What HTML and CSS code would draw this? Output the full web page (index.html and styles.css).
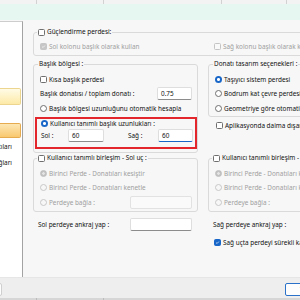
FILE: index.html
```html
<!DOCTYPE html>
<html lang="tr">
<head>
    <meta charset="UTF-8">
    <title>Perde Başlık Ayarları</title>
    <link rel="stylesheet" href="styles.css">
</head>
<body>
<div class="window">
    <div class="topbar">
        <div class="tab w37"></div>
        <div class="tab w67"></div>
        <div class="tab w118"></div>
        <div class="tab w65"></div>
        <div class="tab"></div>
    </div>
    <div class="ribbon"></div>

    <div class="body">
        <div class="side">
            <div class="item hot"></div>
            <div class="item plain"></div>
            <div class="item sel"></div>
            <div class="item text"><span>Donatıları</span></div>
            <div class="item text"><span>Bağları</span></div>
        </div>

        <div class="main">
            <!-- Güçlendirme -->
            <fieldset class="group wide">
                <legend><span class="cb"></span>Güçlendirme perdesi:</legend>
                <div class="pair">
                    <div class="row off"><span class="cb on dis"><svg viewBox="0 0 8 8"><path d="M1.8 4.2 3.3 5.6 6.2 2.5"/></svg></span>Sol kolonu başlık olarak kullan</div>
                    <div class="row off"><span class="cb dis"></span>Sağ kolonu başlık olarak kullan</div>
                </div>
            </fieldset>

            <div class="cols top">
                <fieldset class="group">
                    <legend class="txt">Başlık bölgesi :</legend>
                    <div class="row"><span class="cb"></span>Kısa başlık perdesi</div>
                    <div class="row spread">Başlık donatısı / toplam donatı :<span class="field w35">0.75</span></div>
                    <div class="row"><span class="rb"></span>Başlık bölgesi uzunluğunu otomatik hesapla</div>
                    <div class="mark">
                        <div class="row short"><span class="rb on"></span>Kullanıcı tanımlı başlık uzunlukları :</div>
                        <div class="row">
                            <span class="lbl w27">Sol :</span><span class="field w36">60</span>
                            <span class="lbl w30 gap24">Sağ :</span><span class="field w35 focus">60</span>
                        </div>
                    </div>
                </fieldset>

                <div>
                    <fieldset class="group bare">
                        <legend class="txt">Donatı tasarım seçenekleri :</legend>
                        <div class="row"><span class="rb on"></span>Taşıyıcı sistem perdesi</div>
                        <div class="row"><span class="rb"></span>Bodrum kat çevre perdesi</div>
                        <div class="row"><span class="rb"></span>Geometriye göre otomatik belirle</div>
                    </fieldset>
                    <div class="row apl"><span class="cb"></span>Aplikasyonda daima dışarıdan göster</div>
                </div>
            </div>

            <div class="cols mid">
                <fieldset class="group">
                    <legend><span class="cb"></span>Kullanıcı tanımlı birleşim - Sol uç :</legend>
                    <div class="row off"><span class="rb on dis"></span>Birinci Perde - Donatıları kesiştir</div>
                    <div class="row off"><span class="rb dis"></span>Birinci Perde - Donatıları kenetle</div>
                    <div class="row off"><span class="rb dis"></span><span class="lbl w83">Perdeye bağla :</span><span class="field w62 dim"></span></div>
                </fieldset>
                <fieldset class="group">
                    <legend><span class="cb"></span>Kullanıcı tanımlı birleşim - Sağ uç :</legend>
                    <div class="row off"><span class="rb on dis"></span>Birinci Perde - Donatıları kesiştir</div>
                    <div class="row off"><span class="rb dis"></span>Birinci Perde - Donatıları kenetle</div>
                    <div class="row off"><span class="rb dis"></span><span class="lbl w83">Perdeye bağla :</span><span class="field w62 dim"></span></div>
                </fieldset>
            </div>

            <div class="cols low">
                <div class="row plainrow"><span class="lbl w92">Sol perdeye ankraj yap :</span><span class="field w62"></span></div>
                <div class="row plainrow"><span class="lbl w92">Sağ perdeye ankraj yap :</span><span class="field w62"></span></div>
                <div></div>
                <div class="row cont"><span class="cb on"><svg viewBox="0 0 8 8"><path d="M1.8 4.2 3.3 5.6 6.2 2.5"/></svg></span>Sağ uçta perdeyi sürekli kabul et</div>
            </div>
        </div>
    </div>

    <div class="footer">
        <span class="btn left">İptal</span>
        <span class="btn right">Tamam</span>
    </div>
    <div class="strip">
        <div class="tab w37"></div>
        <div class="tab w67"></div>
        <div class="tab"></div>
    </div>
</div>
</body>
</html>
```

FILE: styles.css
```css
html, body {
    margin: 0;
    padding: 0;
    overflow: hidden;
}
body {
    font-family: "Noto Sans", "Open Sans", sans-serif;
    font-size: 6.4px;
    color: #111;
    background: #f7f7f7;
}
.window {
    width: 300px;
    height: 300px;
    overflow: hidden;
    display: flex;
    flex-direction: column;
}

/* top of the window */
.topbar {
    height: 4px;
    display: flex;
    background: #f3f3f3;
    flex: none;
}
.tab {
    border-right: 1px solid #d2d2d2;
    flex: none;
}
.tab:last-child {
    flex: 1;
    border-right: none;
}
.w37 { width: 36px; }
.w67 { width: 66px; }
.w118 { width: 117px; }
.w65 { width: 64px; }
.ribbon {
    height: 16px;
    background: #e6f6f1;
    flex: none;
}

.body {
    height: 257px;
    display: flex;
    flex: none;
}

/* left list */
.side {
    width: 22px;
    margin-top: 1px;
    border-top: 1px solid #cdcdcd;
    border-right: 1px solid #a3a3a3;
    background: #fff;
    padding-top: 66px;
    flex: none;
    overflow: hidden;
}
.item {
    height: 16.5px;
    margin-right: 1px;
    box-sizing: border-box;
}
.item.hot {
    height: 17px;
    background: linear-gradient(#fffbe6, #fdeaa8);
    border: 1px solid #ecd58e;
    border-left: none;
    border-radius: 0 2px 2px 0;
}
.item.plain { height: 18px; }
.item.sel {
    height: 15px;
    background: linear-gradient(#fde7b4, #f9c870);
    border: 1px solid #e6ab4f;
    border-left: none;
    border-radius: 0 2px 2px 0;
}
.item.text {
    display: flex;
    align-items: center;
    justify-content: flex-end;
    padding-right: 9px;
    white-space: nowrap;
}

/* content */
.main {
    width: 420px;
    padding: 8px 0 0 10px;
    flex: none;
}
.group {
    margin: 0;
    padding: 0 5px 0 6px;
    border: 1px solid #dadada;
    border-radius: 3px;
    min-width: 0;
}
.group legend {
    margin-left: -3px;
    padding: 0 1px;
    height: 8px;
    line-height: 8px;
    display: flex;
    align-items: center;
    white-space: nowrap;
}
.group legend.txt { margin-left: -2px; }
.wide {
    width: 360px;
    padding-top: 3px;
    padding-bottom: 1.5px;
}
.pair {
    display: grid;
    grid-template-columns: 174px 1fr;
}
.cols {
    display: grid;
    grid-template-columns: 165px 165px;
    column-gap: 10px;
}
.cols .group {
    padding-top: 4px;
}
.top { margin-top: 4px; }
.top > .group { padding-bottom: 3px; }
.bare { padding-bottom: 0; }
.mid { margin-top: 1px; }
.mid .group { padding-bottom: 1px; }
.low { margin-top: 6px; }

.row {
    height: 14.5px;
    display: flex;
    align-items: center;
    white-space: nowrap;
}
.row.short { height: 9.5px; }
.row.spread { justify-content: space-between; }
.row.off { color: #a0a0a0; }
.apl {
    margin-top: 2px;
    padding-left: 8px;
}
.plainrow { padding-left: 5px; }
.cont {
    margin-top: 3px;
    padding-left: 6px;
}

/* annotation frame */
.mark {
    margin: 1.5px -5px 0 -5px;
    padding: 0 5px 4px 4px;
    border: 2px solid #e2262c;
}

/* controls */
.cb, .rb {
    width: 7px;
    height: 7px;
    box-sizing: border-box;
    border: 1px solid #6f6f6f;
    background: #fff;
    margin-right: 2px;
    flex: none;
    display: flex;
}
.cb { border-radius: 1.5px; }
.rb { border-radius: 50%; }
.cb svg {
    width: 100%;
    height: 100%;
}
.cb path {
    fill: none;
    stroke: #fff;
    stroke-width: 1.1;
}
.cb.on {
    background: #1866c7;
    border-color: #1866c7;
}
.cb.dis {
    border-color: #c4c4c4;
    background: #f9f9f9;
}
.cb.on.dis {
    background: #c6c6c6;
    border-color: #c6c6c6;
}
.rb.on {
    border: none;
    background: radial-gradient(circle, #fff 0 1.3px, #1866c7 1.6px);
}
.rb.dis {
    border-color: #c8c8c8;
    background: #f7f7f7;
}
.rb.on.dis {
    border: 1px solid #bdbdbd;
    background: radial-gradient(circle, #e4e4e4 0 1.2px, #c2c2c2 1.5px);
}

.field {
    height: 13px;
    box-sizing: border-box;
    display: flex;
    align-items: center;
    padding: 0 3px;
    background: #fff;
    border: 1px solid #dedede;
    border-bottom-color: #8c8c8c;
    border-radius: 2px;
    color: #111;
    flex: none;
}
.field.focus {
    border-bottom: 1.5px solid #1866c7;
}
.field.dim {
    background: #fafafa;
    border-color: #e2e2e2;
}
.w35 { width: 35px; }
.w36 { width: 36px; }
.w62 { width: 62px; }
.lbl { flex: none; }
.w27 { width: 27px; }
.w30 { width: 30px; }
.w83 { width: 81px; }
.w92 { width: 92px; }
.gap24 { margin-left: 24px; }

/* bottom buttons */
.footer {
    height: 21px;
    box-sizing: border-box;
    border-top: 1px solid #e6e6e6;
    background: #eeeeee;
    display: flex;
    justify-content: space-between;
    padding-top: 5px;
    flex: none;
}
.btn {
    height: 13px;
    box-sizing: border-box;
    display: flex;
    align-items: center;
    justify-content: center;
    background: #fdfdfd;
    border: 1px solid #cfcfcf;
    border-radius: 2px;
    flex: none;
}
.btn.left {
    width: 52px;
    margin-left: -50px;
}
.btn.right {
    width: 52px;
    margin-right: -37px;
    border-color: #2a72c9;
}
.strip {
    height: 2px;
    display: flex;
    background: #d6d6d6;
    flex: none;
}
.strip .tab { border-right-color: #bcbcbc; }
```
